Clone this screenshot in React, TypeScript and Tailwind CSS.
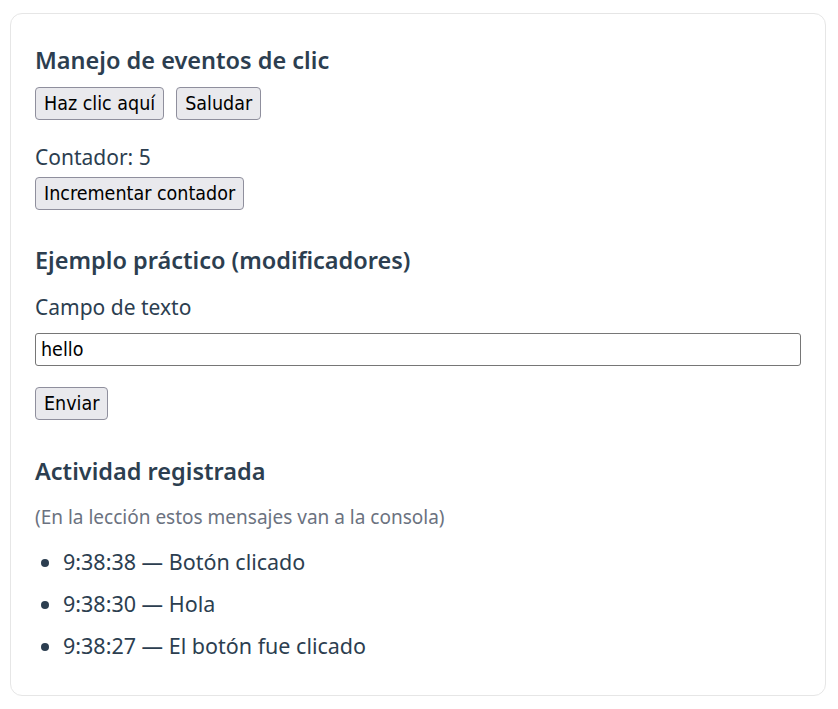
import { useState } from "react";

const font = { fontFamily: '"Noto Sans", "Open Sans", sans-serif' };

function Btn({ children, onClick }: { children: React.ReactNode; onClick?: () => void }) {
  return (
    <button
      onClick={onClick}
      className="h-[33px] px-[8px] text-[19.5px] leading-none text-black bg-[#e9e9ed] border border-[#8f8f9d] rounded-[4px] font-['DejaVu_Sans_Condensed','Liberation_Sans',sans-serif]"
    >
      {children}
    </button>
  );
}

export default function App() {
  const [count, setCount] = useState(5);
  const [text, setText] = useState("hello");
  const logs = ["9:38:38 — Botón clicado", "9:38:30 — Hola", "9:38:27 — El botón fue clicado"];

  return (
    <div className="bg-white min-h-[709px] pt-[13px] pl-[10px]" style={font}>
      <div className="w-[816px] border border-[#e6e6e6] rounded-[12px] px-[24px] pt-[33px] pb-[34px] text-[#2c3e50]">
        {/* Clic */}
        <h2 className="text-[23.5px] leading-[26px] font-semibold">Manejo de eventos de clic</h2>
        <div className="flex gap-[12px] mt-[14px]">
          <Btn>Haz clic aquí</Btn>
          <Btn>Saludar</Btn>
        </div>
        <p className="text-[21px] leading-[30px] mt-[22px]">Contador: {count}</p>
        <div className="mt-[5px]">
          <Btn onClick={() => setCount(count + 1)}>Incrementar contador</Btn>
        </div>

        {/* Modificadores */}
        <h2 className="text-[23.5px] leading-[26px] font-semibold mt-[37px]">Ejemplo práctico (modificadores)</h2>
        <p className="text-[21px] leading-[30px] mt-[19px]">Campo de texto</p>
        <input
          value={text}
          onChange={(e) => setText(e.target.value)}
          className="block w-full h-[33px] mt-[11px] px-[5px] text-[19.5px] text-black border border-[#767676] rounded-[3px] font-['DejaVu_Sans_Condensed','Liberation_Sans',sans-serif]"
        />
        <div className="mt-[21px]">
          <Btn>Enviar</Btn>
        </div>

        {/* Actividad */}
        <h2 className="text-[23.5px] leading-[26px] font-semibold mt-[38px]">Actividad registrada</h2>
        <p className="text-[19px] leading-[26px] text-[#6b7280] mt-[20px]">(En la lección estos mensajes van a la consola)</p>
        <ul className="mt-[17px] pl-[28px] list-disc space-y-[12px]">
          {logs.map((l) => (
            <li key={l} className="text-[21.5px] leading-[30px]">
              {l}
            </li>
          ))}
        </ul>
      </div>
    </div>
  );
}
